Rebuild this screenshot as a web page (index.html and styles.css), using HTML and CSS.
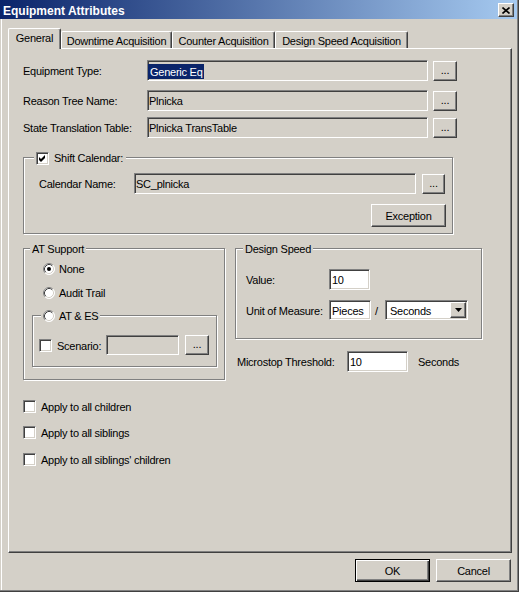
FILE: index.html
```html
<!DOCTYPE html>
<html>
<head>
<meta charset="utf-8">
<title>Equipment Attributes</title>
<link rel="stylesheet" href="styles.css">
</head>
<body>
<div class="win">
  <div class="frame">
    <div class="titlebar">
      <span class="title">Equipment Attributes</span>
      <span class="close"><svg width="8" height="7" viewBox="0 0 8 7"><path d="M0.5 0.5 L7.5 6.5 M7.5 0.5 L0.5 6.5" stroke="#000" stroke-width="1.6" fill="none"/></svg></span>
    </div>
    <div class="content">
      <div class="tabs">
        <div class="tab sel t-gen">General</div>
        <div class="tab t-down">Downtime Acquisition</div>
        <div class="tab t-count">Counter Acquisition</div>
        <div class="tab t-speed">Design Speed Acquisition</div>
      </div>
      <div class="panel">
        <div class="frow">
          <span class="lbl l-main">Equipment Type:</span>
          <span class="field f-main sel-field"><span class="hl">Generic Eq</span></span>
          <span class="btn dots">...</span>
        </div>
        <div class="frow r2">
          <span class="lbl l-main">Reason Tree Name:</span>
          <span class="field f-main">Plnicka</span>
          <span class="btn dots">...</span>
        </div>
        <div class="frow r3">
          <span class="lbl l-main">State Translation Table:</span>
          <span class="field f-main">Plnicka TransTable</span>
          <span class="btn dots">...</span>
        </div>

        <div class="group g-shift">
          <div class="legend lg-shift">
            <span class="chk"><svg width="9" height="9" viewBox="0 0 9 9"><polygon points="1,3 3,5 7,1 7,4 3,8 1,6" fill="#000"/></svg></span>
            <span class="ltext">Shift Calendar:</span>
          </div>
          <div class="frow cal-row">
            <span class="lbl l-cal">Calendar Name:</span>
            <span class="field f-cal">SC_plnicka</span>
            <span class="btn dots d-cal">...</span>
          </div>
          <div class="exc-row">
            <span class="btn pbtn">Exception</span>
          </div>
        </div>

        <div class="mid">
          <div class="group g-at">
            <div class="legend lg-at">AT Support</div>
            <div class="rrow r-none">
              <svg class="radio" width="12" height="12" viewBox="0 0 12 12"><circle cx="6" cy="6" r="5.5" fill="#fff"/><path d="M2.11 9.89 A5.5 5.5 0 0 1 9.89 2.11" stroke="#808080" fill="none"/><path d="M9.89 2.11 A5.5 5.5 0 0 1 2.11 9.89" stroke="#fff" fill="none"/><path d="M2.82 9.18 A4.5 4.5 0 0 1 9.18 2.82" stroke="#404040" fill="none"/><path d="M9.18 2.82 A4.5 4.5 0 0 1 2.82 9.18" stroke="#d4d0c8" fill="none"/><circle cx="6" cy="6" r="2" fill="#000"/></svg>
              <span>None</span>
            </div>
            <div class="rrow r-audit">
              <svg class="radio" width="12" height="12" viewBox="0 0 12 12"><circle cx="6" cy="6" r="5.5" fill="#fff"/><path d="M2.11 9.89 A5.5 5.5 0 0 1 9.89 2.11" stroke="#808080" fill="none"/><path d="M9.89 2.11 A5.5 5.5 0 0 1 2.11 9.89" stroke="#fff" fill="none"/><path d="M2.82 9.18 A4.5 4.5 0 0 1 9.18 2.82" stroke="#404040" fill="none"/><path d="M9.18 2.82 A4.5 4.5 0 0 1 2.82 9.18" stroke="#d4d0c8" fill="none"/></svg>
              <span>Audit Trail</span>
            </div>
            <div class="group g-ates">
              <div class="legend lg-ates">
                <svg class="radio" width="12" height="12" viewBox="0 0 12 12"><circle cx="6" cy="6" r="5.5" fill="#fff"/><path d="M2.11 9.89 A5.5 5.5 0 0 1 9.89 2.11" stroke="#808080" fill="none"/><path d="M9.89 2.11 A5.5 5.5 0 0 1 2.11 9.89" stroke="#fff" fill="none"/><path d="M2.82 9.18 A4.5 4.5 0 0 1 9.18 2.82" stroke="#404040" fill="none"/><path d="M9.18 2.82 A4.5 4.5 0 0 1 2.82 9.18" stroke="#d4d0c8" fill="none"/></svg>
                <span class="rtext">AT &amp; ES</span>
              </div>
              <div class="frow scen-row">
                <span class="chk"></span>
                <span class="lbl l-scen">Scenario:</span>
                <span class="field f-scen"></span>
                <span class="btn dots d-scen">...</span>
              </div>
            </div>
          </div>

          <div class="rcol">
            <div class="group g-ds">
              <div class="legend lg-ds">Design Speed</div>
              <div class="frow val-row">
                <span class="lbl l-ds">Value:</span>
                <span class="field white f-val">10</span>
              </div>
              <div class="frow unit-row">
                <span class="lbl l-ds">Unit of Measure:</span>
                <span class="field white f-pieces">Pieces</span>
                <span class="slash">/</span>
                <span class="select">
                  <span class="seltext">Seconds</span>
                  <span class="btn ddbtn"><svg width="7" height="4" viewBox="0 0 7 4"><polygon points="0,0 7,0 3.5,4" fill="#000"/></svg></span>
                </span>
              </div>
            </div>
            <div class="frow micro-row">
              <span class="lbl l-micro">Microstop Threshold:</span>
              <span class="field white f-micro">10</span>
              <span class="lbl unit">Seconds</span>
            </div>
          </div>
        </div>

        <div class="crow c1"><span class="chk"></span><span class="ctext">Apply to all children</span></div>
        <div class="crow c2"><span class="chk"></span><span class="ctext">Apply to all siblings</span></div>
        <div class="crow c3"><span class="chk"></span><span class="ctext">Apply to all siblings' children</span></div>
      </div>
      <div class="actions">
        <span class="btn pbtn def">OK</span>
        <span class="btn pbtn">Cancel</span>
      </div>
    </div>
  </div>
</div>
</body>
</html>
```

FILE: styles.css
```css
* { box-sizing: border-box; }
html, body { margin: 0; padding: 0; }
body {
  width: 519px;
  height: 592px;
  overflow: hidden;
  background: #d4d0c8;
  font-family: "Liberation Sans", Arial, sans-serif;
  font-size: 11px;
  line-height: 13px;
  letter-spacing: -0.25px;
  color: #000;
}
.win {
  width: 519px;
  height: 592px;
  border-right: 1px solid #404040;
  border-bottom: 1px solid #404040;
}
.frame {
  height: 100%;
  display: flex;
  flex-direction: column;
  border-right: 1px solid #808080;
  border-bottom: 1px solid #808080;
}
.titlebar {
  flex: none;
  height: 19px;
  display: flex;
  align-items: flex-start;
  justify-content: space-between;
  padding: 0 3px 0 3px;
  background: linear-gradient(90deg, #0a246a 0%, #a6caf0 100%);
}
.title {
  color: #fff;
  font-weight: bold;
  font-size: 12px;
  letter-spacing: 0;
  line-height: 14px;
  padding-top: 4px;
  white-space: nowrap;
}
.close {
  width: 16px;
  height: 14px;
  margin-top: 3px;
  display: flex;
  align-items: center;
  justify-content: center;
  background: #d4d0c8;
  border: 1px solid;
  border-color: #fff #404040 #404040 #fff;
  box-shadow: inset -1px -1px #808080;
}
.close svg { display: block; }
.content {
  flex: 1;
  margin-left: 1px;
  border-left: 1px solid #fff;
  display: flex;
  flex-direction: column;
}

/* tabs */
.tabs {
  flex: none;
  height: 29px;
  display: flex;
  align-items: flex-end;
  padding-left: 6px;
}
.tab {
  height: 17px;
  padding-top: 3px;
  text-align: center;
  white-space: nowrap;
  border-top: 1px solid #fff;
  border-left: 1px solid #fff;
  border-right: 1px solid #404040;
  box-shadow: inset -1px 0 #808080;
  border-radius: 2px 2px 0 0;
}
.tab.sel {
  height: 21px;
  padding-top: 3px;
  margin-bottom: -1px;
  position: relative;
  z-index: 1;
  background: #d4d0c8;
}
.t-gen { width: 53px; }
.t-down { width: 111px; }
.t-count { width: 103px; }
.t-speed { width: 133px; }

/* panel */
.panel {
  flex: none;
  margin-left: 6px;
  width: 504px;
  height: 505px;
  border: 1px solid;
  border-color: #fff #404040 #404040 #fff;
  box-shadow: inset -1px -1px #808080;
  padding: 11px 0 0 14px;
}

.frow { display: flex; align-items: center; height: 21px; }
.lbl { flex: none; white-space: nowrap; padding-top: 2px; }
.field {
  flex: none;
  height: 21px;
  display: flex;
  align-items: center;
  padding: 2px 1px 0 1px;
  white-space: nowrap;
  overflow: hidden;
  border: 1px solid;
  border-color: #808080 #fff #fff #808080;
  box-shadow: inset 1px 1px #404040, inset -1px -1px #d4d0c8;
}
.field.white { background: #fff; padding-left: 2px; }
.sel-field { padding-left: 0; padding-top: 1px; }
.hl { background: #0a246a; color: #fff; padding: 1px 1px 0 2px; line-height: 14px; }
.btn {
  flex: none;
  display: flex;
  align-items: center;
  justify-content: center;
  background: #d4d0c8;
  border: 1px solid;
  border-color: #fff #404040 #404040 #fff;
  box-shadow: inset -1px -1px #808080;
  white-space: nowrap;
  padding-top: 1px;
}
.dots { width: 24px; height: 20px; margin-left: 5px; line-height: 10px; padding-top: 0; padding-bottom: 2px; }

.l-main { width: 124px; }
.f-main { width: 281px; }
.r2 { margin-top: 9px; }
.r3 { margin-top: 6px; }

/* group boxes */
.group {
  border: 1px solid #808080;
  box-shadow: inset 1px 1px #fff, 1px 1px #fff;
}
.legend {
  display: flex;
  align-items: center;
  width: max-content;
  height: 14px;
  margin-top: -7px;
  padding: 0 2px;
  background: #d4d0c8;
  white-space: nowrap;
}
.g-shift { margin-top: 19px; width: 430px; padding-bottom: 6px; }
.lg-shift { margin-left: 10px; padding-right: 3px; }
.lg-shift .ltext { margin-left: 5px; padding-top: 1px; }
.cal-row { margin-top: 8px; padding-left: 15px; }
.l-cal { width: 95px; }
.f-cal { width: 282px; }
.d-cal { width: 23px; margin-left: 6px; }
.exc-row { display: flex; justify-content: flex-end; margin-top: 10px; padding-right: 6px; }
.pbtn { width: 75px; height: 23px; }

.chk {
  flex: none;
  width: 13px;
  height: 13px;
  display: flex;
  align-items: center;
  justify-content: center;
  background: #fff;
  border: 1px solid;
  border-color: #808080 #fff #fff #808080;
  box-shadow: inset 1px 1px #404040, inset -1px -1px #d4d0c8;
}
.chk svg { display: block; }
.radio { flex: none; display: block; }

.mid { display: flex; align-items: flex-start; margin-top: 14px; }
.g-at { width: 202px; padding-bottom: 12px; }
.lg-at { margin-left: 6px; padding-top: 1px; }
.rrow { display: flex; align-items: center; height: 14px; padding-left: 19px; }
.rrow span { margin-left: 4px; padding-top: 1px; }
.r-none { margin-top: 6px; }
.r-audit { margin-top: 10px; }
.g-ates { width: 185px; margin: 15px 0 0 8px; padding-bottom: 11px; }
.lg-ates { margin-left: 8px; }
.lg-ates .rtext { margin-left: 4px; padding-top: 1px; }
.scen-row { margin-top: 12px; padding-left: 6px; height: 20px; }
.l-scen { width: 54px; padding-left: 5px; }
.f-scen { width: 73px; height: 20px; }
.d-scen { margin-left: 6px; }

.rcol { margin-left: 10px; display: flex; flex-direction: column; }
.g-ds { width: 247px; padding-bottom: 18px; }
.lg-ds { margin-left: 7px; padding-top: 1px; }
.val-row { margin-top: 13px; padding-left: 10px; }
.l-ds { width: 83px; }
.f-val { width: 41px; }
.unit-row { margin-top: 10px; padding-left: 10px; height: 20px; }
.f-pieces { width: 42px; height: 20px; }
.slash { flex: none; width: 14px; padding-left: 4px; padding-top: 2px; }
.select {
  flex: none;
  width: 83px;
  height: 20px;
  display: flex;
  align-items: center;
  justify-content: space-between;
  padding: 0 1px 0 4px;
  background: #fff;
  border: 1px solid;
  border-color: #808080 #fff #fff #808080;
  box-shadow: inset 1px 1px #404040, inset -1px -1px #d4d0c8;
}
.seltext { padding-top: 2px; }
.ddbtn { width: 16px; height: 16px; padding-top: 0; }
.ddbtn svg { display: block; }
.micro-row { margin-top: 12px; padding-left: 2px; }
.l-micro { width: 110px; }
.f-micro { width: 61px; }
.unit { margin-left: 10px; }

.crow { display: flex; align-items: center; height: 13px; }
.ctext { margin-left: 5px; white-space: nowrap; padding-top: 1px; }
.c1 { margin-top: 20px; }
.c2 { margin-top: 13px; }
.c3 { margin-top: 14px; }

.actions {
  flex: none;
  display: flex;
  justify-content: flex-end;
  gap: 6px;
  margin-top: 6px;
  padding-right: 6px;
}
.btn.def {
  border: 1px solid #000;
  box-shadow: inset 1px 1px #fff, inset -1px -1px #404040, inset -2px -2px #808080;
}
```
